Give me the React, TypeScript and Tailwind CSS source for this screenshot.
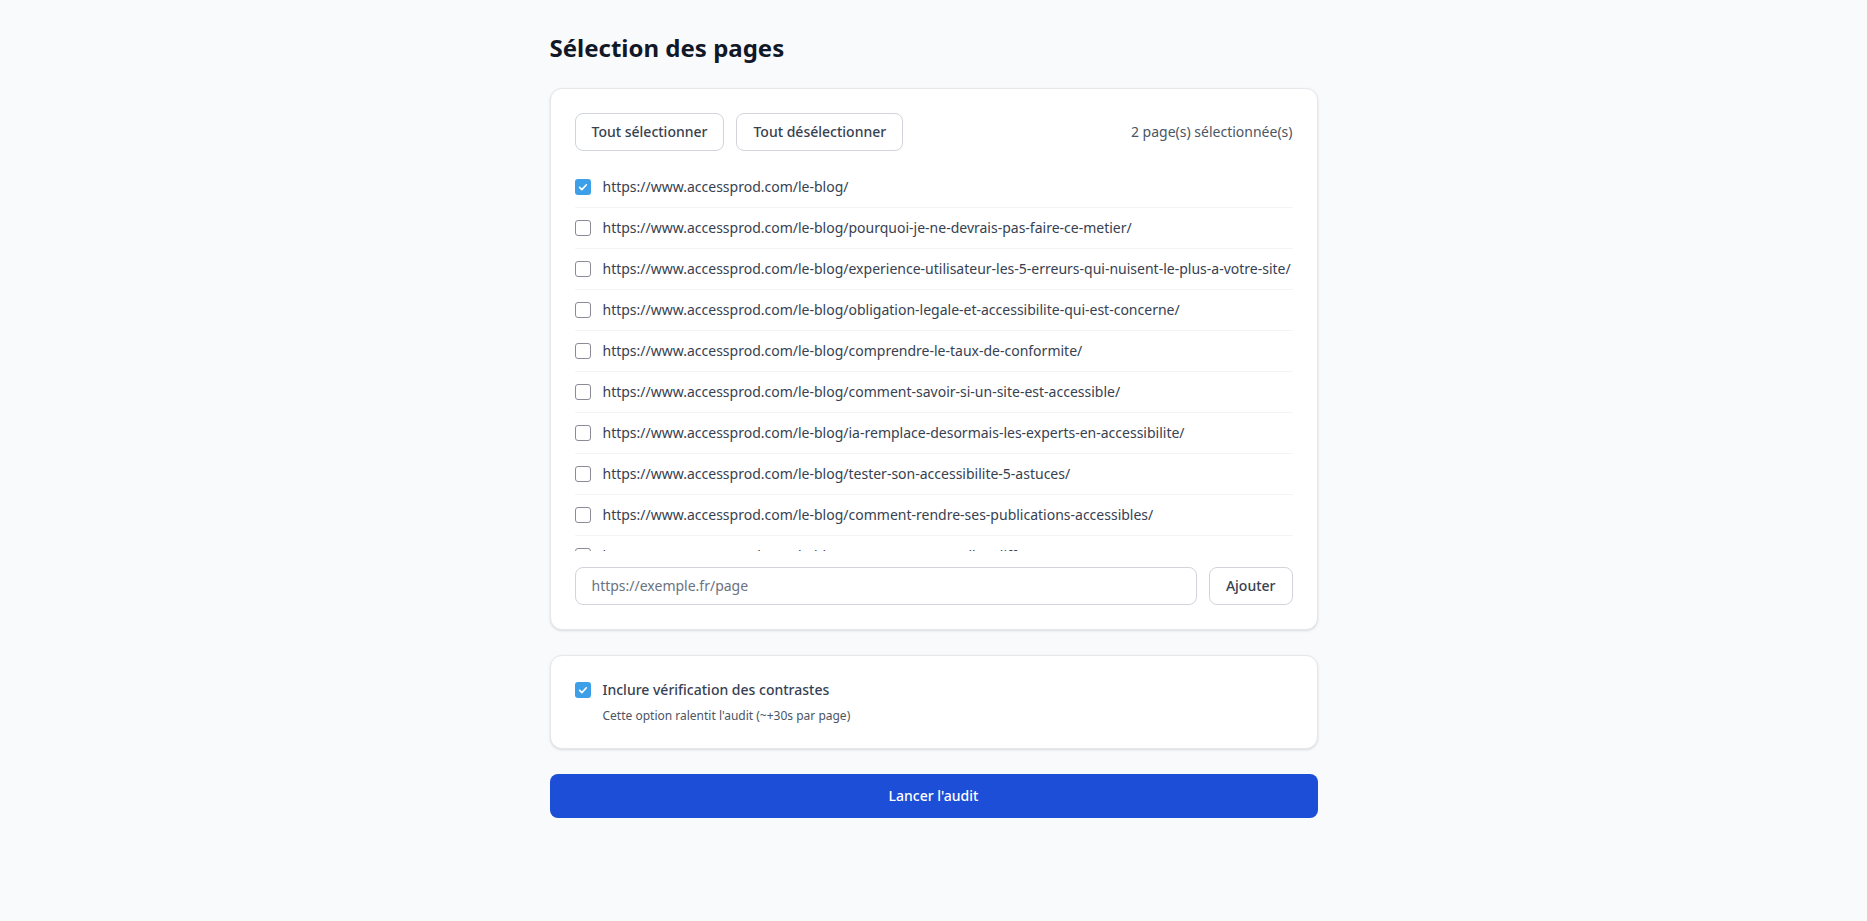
import React, { useState } from "react";

const BASE = "https://www.accessprod.com/le-blog/";

const initialPages = [
  "",
  "pourquoi-je-ne-devrais-pas-faire-ce-metier/",
  "experience-utilisateur-les-5-erreurs-qui-nuisent-le-plus-a-votre-site/",
  "obligation-legale-et-accessibilite-qui-est-concerne/",
  "comprendre-le-taux-de-conformite/",
  "comment-savoir-si-un-site-est-accessible/",
  "ia-remplace-desormais-les-experts-en-accessibilite/",
  "tester-son-accessibilite-5-astuces/",
  "comment-rendre-ses-publications-accessibles/",
  "rgaa-ou-wcag-quelles-differences/",
  "audit-accessibilite-par-ou-commencer/",
  "contact/",
].map((slug) => BASE + slug);

// petite case à cocher dessinée à la main
function Checkbox({ checked, onChange }: { checked: boolean; onChange: () => void }) {
  return (
    <button
      type="button"
      role="checkbox"
      aria-checked={checked}
      onClick={onChange}
      className={
        checked
          ? "flex h-4 w-4 shrink-0 items-center justify-center rounded-[3px] bg-[#3c9fe7]"
          : "flex h-4 w-4 shrink-0 items-center justify-center rounded-[3px] border border-[#8b8b97] bg-white"
      }
    >
      {checked && (
        <svg viewBox="0 0 16 16" className="h-3 w-3" fill="none">
          <path
            d="M3.5 8.5l3 3 6-6.5"
            stroke="white"
            strokeWidth="2.2"
            strokeLinecap="round"
            strokeLinejoin="round"
          />
        </svg>
      )}
    </button>
  );
}

export default function App() {
  const [pages, setPages] = useState<string[]>(initialPages);
  const [selected, setSelected] = useState<string[]>([initialPages[0], initialPages[10]]);
  const [newUrl, setNewUrl] = useState("");
  const [contrast, setContrast] = useState(true);

  const toggle = (url: string) =>
    setSelected((s) => (s.includes(url) ? s.filter((u) => u !== url) : [...s, url]));

  const addPage = () => {
    if (!newUrl.trim()) return;
    setPages((p) => [...p, newUrl.trim()]);
    setNewUrl("");
  };

  return (
    <div className="min-h-screen bg-[#f9fafb] py-8 font-['Noto_Sans',sans-serif]">
      <div className="mx-auto max-w-3xl">
        <h1 className="mb-6 text-2xl font-bold text-[#111827]">Sélection des pages</h1>

        <div className="mb-[25px] rounded-xl border border-[#e5e7eb] bg-white p-6 shadow-sm">
          {/* barre d'actions */}
          <div className="mb-4 flex items-center justify-between">
            <div className="flex gap-3">
              <button
                className="rounded-lg border border-[#d1d5db] bg-white px-4 py-2 text-sm font-medium text-[#374151]"
                onClick={() => setSelected(pages)}
              >
                Tout sélectionner
              </button>
              <button
                className="rounded-lg border border-[#d1d5db] bg-white px-4 py-2 text-sm font-medium text-[#374151]"
                onClick={() => setSelected([])}
              >
                Tout désélectionner
              </button>
            </div>
            <span className="text-sm text-[#4b5563]">{selected.length} page(s) sélectionnée(s)</span>
          </div>

          {/* liste des pages */}
          <div className="max-h-96 overflow-y-auto [scrollbar-width:none]">
            {pages.map((url) => (
              <label
                key={url}
                className="flex cursor-pointer items-center gap-3 border-b border-[#f3f4f6] py-2.5"
              >
                <Checkbox checked={selected.includes(url)} onChange={() => toggle(url)} />
                <span className="text-sm text-[#374151]">{url}</span>
              </label>
            ))}
          </div>

          {/* ajout manuel */}
          <div className="mt-4 flex gap-3">
            <input
              type="text"
              value={newUrl}
              onChange={(e) => setNewUrl(e.target.value)}
              placeholder="https://exemple.fr/page"
              className="flex-1 rounded-lg border border-[#d1d5db] px-4 py-2 text-sm text-[#374151] placeholder:text-[#6b7280] outline-none"
            />
            <button
              className="rounded-lg border border-[#d1d5db] bg-white px-4 py-2 text-sm font-medium text-[#374151]"
              onClick={addPage}
            >
              Ajouter
            </button>
          </div>
        </div>

        <div className="mb-[25px] rounded-xl border border-[#e5e7eb] bg-white p-6 shadow-sm">
          <label className="flex cursor-pointer items-center gap-3">
            <Checkbox checked={contrast} onChange={() => setContrast(!contrast)} />
            <span className="text-sm font-medium text-[#374151]">Inclure vérification des contrastes</span>
          </label>
          <p className="ml-7 mt-2 text-xs text-[#4b5563]">Cette option ralentit l'audit (~+30s par page)</p>
        </div>

        <button className="w-full rounded-lg bg-[#1d4ed8] py-3 text-sm font-medium text-white">
          Lancer l'audit
        </button>
      </div>
    </div>
  );
}
